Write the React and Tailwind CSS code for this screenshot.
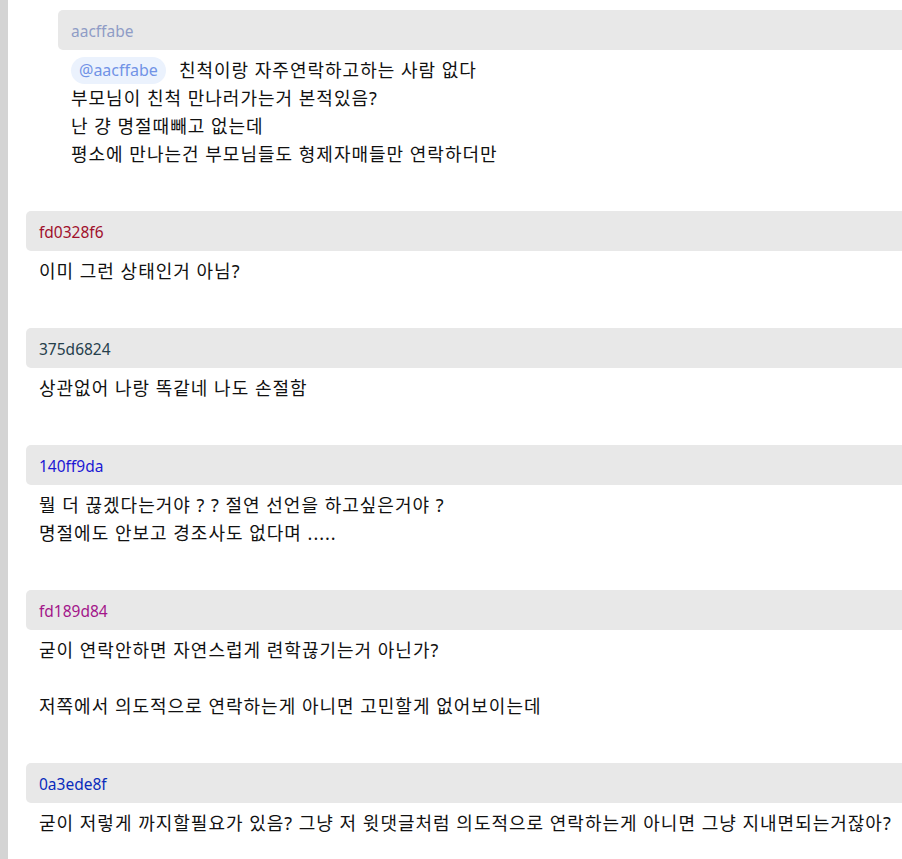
import React from 'react';

const comments = [
    {
        id: 'aacffabe',
        color: '#8f9cc6',
        nested: true,
        mention: 'aacffabe',
        text: '친척이랑 자주연락하고하는 사람 없다\n부모님이 친척 만나러가는거 본적있음?\n난 걍 명절때빼고 없는데\n평소에 만나는건 부모님들도 형제자매들만 연락하더만',
    },
    { id: 'fd0328f6', color: '#a0102c', text: '이미 그런 상태인거 아님?' },
    { id: '375d6824', color: '#26404c', text: '상관없어 나랑 똑같네 나도 손절함' },
    {
        id: '140ff9da',
        color: '#1c18d4',
        text: '뭘 더 끊겠다는거야 ? ? 절연 선언을 하고싶은거야 ?\n명절에도 안보고 경조사도 없다며 .....',
    },
    {
        id: 'fd189d84',
        color: '#a3168a',
        text: '굳이 연락안하면 자연스럽게 련학끊기는거 아닌가?\n\n저쪽에서 의도적으로 연락하는게 아니면 고민할게 없어보이는데',
    },
    {
        id: '0a3ede8f',
        color: '#0a2cbc',
        text: '굳이 저렇게 까지할필요가 있음? 그냥 저 윗댓글처럼 의도적으로 연락하는게 아니면 그냥 지내면되는거잖아?',
    },
];

const Comment = ({ comment }) => {
    const [first, ...rest] = comment.text.split('\n');
    return (
        <div className={comment.nested ? 'ml-8' : ''}>
            {/* header with hash id */}
            <div className="h-10 flex items-center pl-[13px] pt-[3px] bg-[#e8e8e8] rounded-l-[5px] text-[15.5px]" style={{ color: comment.color }}>
                {comment.id}
            </div>
            <div className="pt-[6px] pb-[43px] pl-[13px] text-[18px] tracking-[1px] leading-[28px] text-[#111] whitespace-pre-line">
                {comment.mention ? (
                    <>
                        <div className="flex items-center">
                            <span className="inline-flex items-center h-[27px] px-[8px] mr-[13px] rounded-full bg-[#ebf2fd] text-[#7193e6] text-[16px] tracking-normal">
                                @{comment.mention}
                            </span>
                            <span>{first}</span>
                        </div>
                        <div>{rest.join('\n')}</div>
                    </>
                ) : (
                    comment.text
                )}
            </div>
        </div>
    );
};

const App = () => {
    return (
        <div className="flex min-h-screen bg-white overflow-hidden" style={{ fontFamily: '"Noto Sans", "Noto Sans CJK KR", sans-serif' }}>
            <div className="w-2 shrink-0 bg-[#d4d4d4]"></div>
            <div className="flex-1 pl-[18px] pt-[10px]">
                {comments.map((c) => (
                    <Comment key={c.id} comment={c} />
                ))}
            </div>
        </div>
    );
};

export default App;
